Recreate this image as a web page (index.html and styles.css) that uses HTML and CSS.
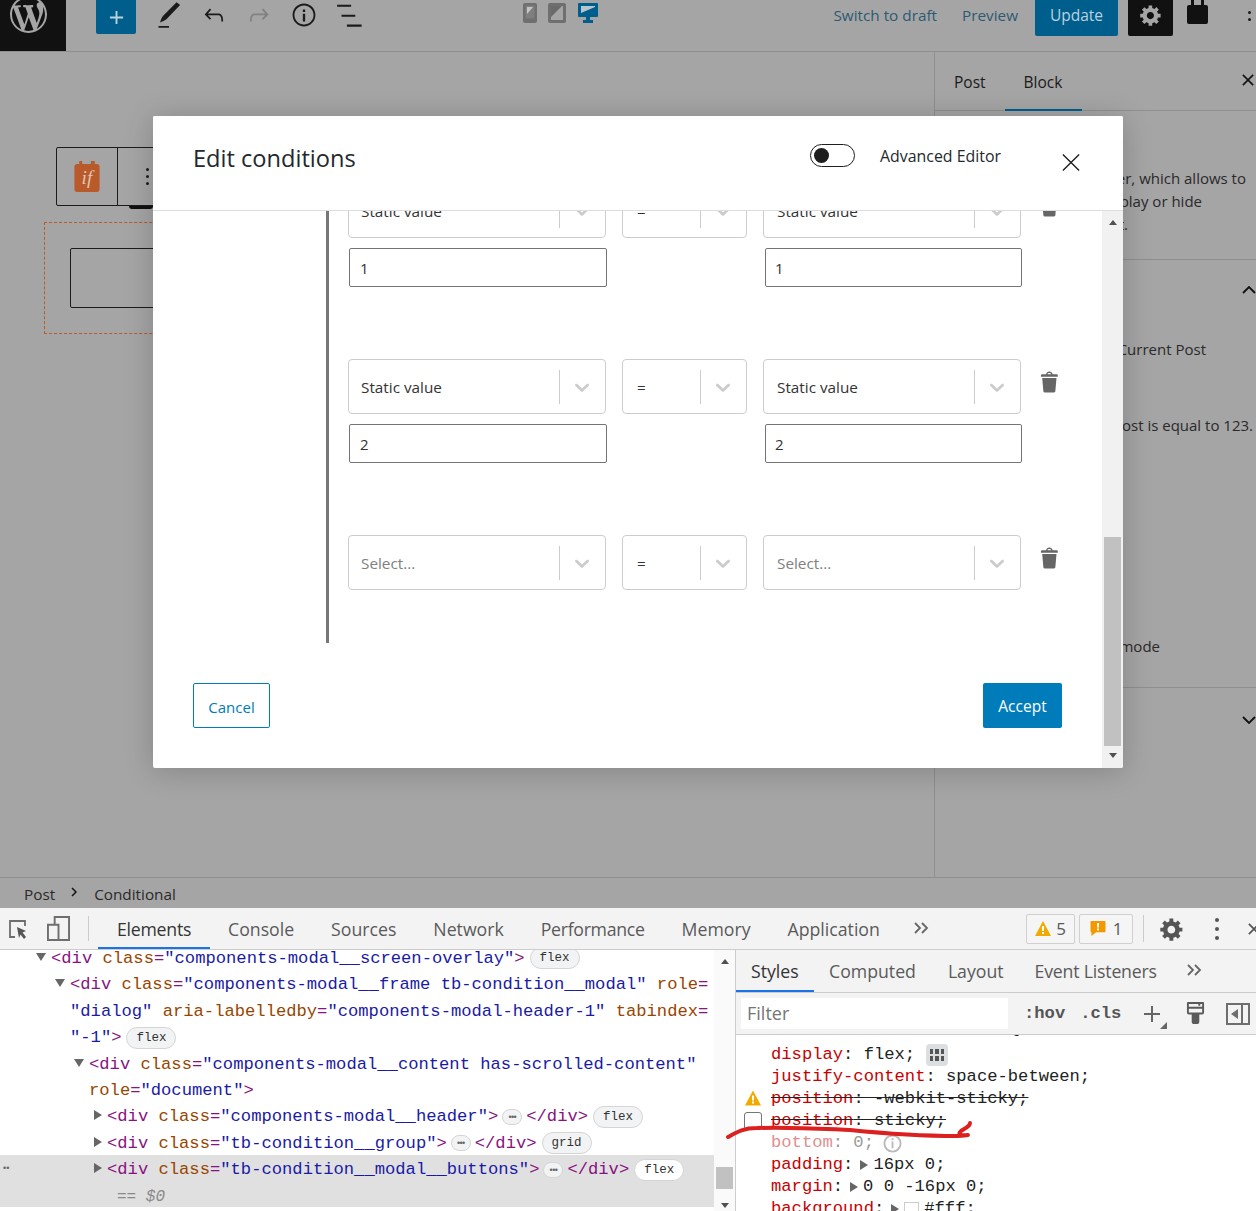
FILE: index.html
```html
<!DOCTYPE html>
<html lang="en">
<head>
<meta charset="utf-8">
<title>Edit conditions</title>
<link rel="stylesheet" href="styles.css">
</head>
<body>
<svg class="sprite" aria-hidden="true">
  <symbol id="ic-chev" viewBox="0 0 20 20"><path d="M4.516 7.548c0.436-0.446 1.043-0.481 1.576 0l3.908 3.747 3.908-3.747c0.533-0.481 1.141-0.446 1.576 0 0.436 0.445 0.408 1.197 0 1.615-0.406 0.418-4.695 4.502-4.695 4.502-0.217 0.223-0.502 0.335-0.789 0.335s-0.572-0.112-0.789-0.335c0 0-4.287-4.084-4.695-4.502s-0.436-1.170 0-1.615z"/></symbol>
  <symbol id="ic-trash" viewBox="0 0 20 20"><path d="M12 4h3c.6 0 1 .4 1 1v1H3V5c0-.6.5-1 1-1h3c.2-1.100 1.300-2 2.500-2s2.300.9 2.500 2zM8 4h3c-.2-.6-.9-1-1.500-1S8.200 3.400 8 4zM4 7h11l-.9 10.100c0 .5-.5.9-1 .9H5.900c-.5 0-.9-.4-1-.9L4 7z"/></symbol>
  <symbol id="ic-cog" viewBox="0 0 20 20"><path d="M18 12h-2.180c-.17.7-.44 1.350-.81 1.930l1.540 1.540-2.100 2.100-1.540-1.540c-.58.36-1.230.63-1.910.79V19H8v-2.180c-.68-.16-1.330-.43-1.910-.79l-1.540 1.540-2.120-2.120 1.540-1.540c-.36-.58-.63-1.230-.79-1.910H1V9.030h2.170c.16-.7.44-1.350.8-1.940L2.430 5.550l2.100-2.100 1.540 1.540c.58-.37 1.240-.64 1.930-.81V2h3v2.180c.68.16 1.330.43 1.910.79l1.540-1.540 2.120 2.120-1.540 1.540c.36.59.64 1.240.8 1.940H18V12zm-8.500 1.500c1.660 0 3-1.340 3-3s-1.340-3-3-3-3 1.340-3 3 1.340 3 3 3z"/></symbol>
  <symbol id="ic-warn" viewBox="0 0 16 15"><path d="M8 0l8 15H0z" fill="#f1ab00"/><path d="M7 5h2v5H7zM7 11h2v2H7z" fill="#fff"/></symbol>
  <symbol id="ic-more" viewBox="0 0 16 12"><path d="M2 1l5 5-5 5M9 1l5 5-5 5" fill="none" stroke="#666" stroke-width="1.800"/></symbol>
</svg>
<div class="page">
  <section class="editor">
    <header class="topbar">
      <div class="wp-logo">
        <svg class="wp-mark" viewBox="0 0 20 20"><path d="M20 10c0-5.51-4.49-10-10-10C4.48 0 0 4.49 0 10c0 5.52 4.48 10 10 10 5.51 0 10-4.48 10-10zM7.78 15.37L4.37 6.22c.55-.02 1.17-.08 1.17-.08.5-.06.44-1.13-.06-1.11 0 0-1.45.11-2.37.11-.18 0-.37 0-.58-.01C4.12 2.69 6.87 1.11 10 1.11c2.33 0 4.45.87 6.05 2.34-.68-.11-1.65.39-1.65 1.58 0 .74.45 1.36.9 2.1.35.61.55 1.36.55 2.46 0 1.49-1.4 5-1.4 5l-3.03-8.37c.54-.02.82-.17.82-.17.5-.05.44-1.25-.06-1.22 0 0-1.44.12-2.38.12-.87 0-2.33-.12-2.33-.12-.5-.03-.56 1.2-.06 1.22l.92.08 1.26 3.41zM17.41 10c.24-.64.74-1.87.43-4.25.7 1.29 1.05 2.71 1.05 4.25 0 3.29-1.73 6.24-4.4 7.78.97-2.59 1.94-5.2 2.92-7.78zM6.1 18.09C3.12 16.65 1.11 13.53 1.11 10c0-1.3.23-2.48.72-3.59C3.25 10.3 4.67 14.2 6.1 18.09zm4.03-6.63l2.58 6.98c-.86.29-1.76.45-2.71.45-.79 0-1.57-.11-2.29-.33.81-2.38 1.62-4.74 2.42-7.1z"/></svg>
      </div>
      <div class="inserter">
        <svg class="plus" viewBox="0 0 16 16"><path d="M7 1h2v6h6v2H9v6H7V9H1V7h6z"/></svg>
      </div>
      <div class="tools">
        <svg class="tool" viewBox="0 0 24 24"><path d="M3 21.500h9V23H3zM18.500 1l3 2.500L10 15.500c-1.500 1.200-3.800 2.400-5.600 3 .4-2 1.300-4.300 2.600-5.800z"/></svg>
        <svg class="tool" viewBox="0 0 24 24"><path d="M18.300 11.700c-.6-.6-1.400-.9-2.300-.9H6.700l2.900-3.300-1.100-1-4.500 5L8.500 16l1-1-2.700-2.700H16c.5 0 .9.2 1.300.5 1 1 1 3.400 1 4.500v.3h1.500v-.2c0-1.500 0-4.300-1.500-5.700z"/></svg>
        <svg class="tool tool-off" viewBox="0 0 24 24"><path d="M15.600 6.500l-1.100 1 2.900 3.300H8c-.9 0-1.700.3-2.300.9-1.400 1.500-1.400 4.200-1.400 5.600v.2h1.500v-.3c0-1.100 0-3.500 1-4.500.3-.3.7-.5 1.300-.5h9.200L14.500 15l1.100 1.100 4.600-4.600-4.600-5z"/></svg>
        <svg class="tool" viewBox="0 0 24 24"><path d="M12 2.200c-5.400 0-9.800 4.400-9.800 9.800s4.400 9.800 9.800 9.800 9.800-4.400 9.800-9.800-4.400-9.800-9.800-9.800zm0 18c-4.500 0-8.200-3.700-8.200-8.200S7.500 3.800 12 3.800s8.200 3.700 8.200 8.200-3.700 8.200-8.200 8.200zM11 17.500h2V11h-2v6.500zm0-8h2v-2.200h-2v2.200z"/></svg>
        <svg class="tool" viewBox="0 0 24 24"><path d="M13.800 3.200H1.800v1.800h12V3.200zm-3.600 17v1.800h12.600v-1.800H10.200zm7.200-8.500H5.600v1.800h11.800v-1.800z"/></svg>
      </div>
      <div class="devices">
        <svg class="device-phone" viewBox="0 0 14 20"><rect width="14" height="20" rx="2" fill="#6f6f6f"/><rect x="2.500" y="2.500" width="9" height="13" fill="#7f7f7f"/><path d="M4 4h6L4 11z" fill="#c6c6c6"/></svg>
        <svg class="device-tablet" viewBox="0 0 18 20"><path d="M2 0h14a2 2 0 0 1 2 2v16a2 2 0 0 1-2 2H2a2 2 0 0 1-2-2V2a2 2 0 0 1 2-2zm1 3v14h12V3z" fill="#6f6f6f" fill-rule="evenodd"/><path d="M3 3h11L3 14z" fill="#6a6a6a"/></svg>
        <svg class="device-desktop" viewBox="0 0 20 20"><path d="M1 0h18a1 1 0 0 1 1 1v12a1 1 0 0 1-1 1h-7v3h3v3H5v-3h3v-3H1a1 1 0 0 1-1-1V1a1 1 0 0 1 1-1z" fill="#005e8c"/><path d="M3 3h14v1L3 10z" fill="#b5c6cf"/></svg>
      </div>
      <div class="actions">
        <span class="link">Switch to draft</span>
        <span class="link preview">Preview</span>
        <span class="update">Update</span>
        <span class="settings"><svg class="cog"><use href="#ic-cog"/></svg></span>
        <svg class="plugin" viewBox="0 0 21 24"><path d="M4 0h3v5h7V0h3v5h2a2 2 0 0 1 2 2v15a2 2 0 0 1-2 2H2a2 2 0 0 1-2-2V7a2 2 0 0 1 2-2h2z"/></svg>
        <span class="more-dots"><i></i><i></i></span>
      </div>
    </header>

    <div class="workspace">
      <main class="canvas">
        <div class="block-toolbar">
          <span class="tb-icon-cell">
            <svg class="if-icon" viewBox="0 0 26 32"><path d="M5 0h3v3h9V0h4v3h2a3 3 0 0 1 3 3v23a3 3 0 0 1-3 3H3a3 3 0 0 1-3-3V6a3 3 0 0 1 3-3h2z" fill="#b85a2a"/><text x="13" y="24" class="if-text">if</text></svg>
          </span>
          <span class="tb-more-cell"><span class="more-dots more-dots-dark"><i></i><i></i><i></i></span></span>
        </div>
        <div class="block-dashed">
          <div class="block-inner"></div>
        </div>
      </main>
      <aside class="sidebar">
        <div class="side-tabs">
          <span class="side-tab">Post</span>
          <span class="side-tab side-tab-active">Block</span>
          <svg class="side-close" viewBox="0 0 14 14"><path d="M1 1l12 12M13 1L1 13"/></svg>
        </div>
        <div class="side-intro">
          <p class="side-line end-246">container, which allows to</p>
          <p class="side-line end-202">display or hide</p>
          <p class="side-line end-128">content.</p>
        </div>
        <div class="side-panel">
          <div class="side-head">
            <svg class="chev" viewBox="0 0 14 8"><path d="M1 7l6-6 6 6"/></svg>
          </div>
          <p class="side-line end-206 side-strong">Current Post</p>
          <p class="side-line end-252 side-sentence">post is equal to 123.</p>
          <p class="side-line end-160 side-mode">mode</p>
        </div>
        <div class="side-head side-last">
          <svg class="chev" viewBox="0 0 14 8"><path d="M1 1l6 6 6-6"/></svg>
        </div>
      </aside>
    </div>

    <footer class="crumbs">
      <span>Post</span>
      <svg class="crumb-sep" viewBox="0 0 6 10"><path d="M1 1l4 4-4 4"/></svg>
      <span>Conditional</span>
    </footer>

    <div class="modal">
      <div class="modal-header">
        <h1 class="modal-title">Edit conditions</h1>
        <span class="toggle"><i></i></span>
        <span class="toggle-label">Advanced Editor</span>
        <svg class="modal-close" viewBox="0 0 20 20"><path d="M1 1l18 18M19 1L1 19"/></svg>
      </div>
      <div class="modal-body">
        <div class="modal-content">
          <div class="group">
            <div class="cond">
              <div class="cond-row">
                <div class="select"><span class="select-text">Static value</span><span class="select-sep"></span><svg class="select-chev"><use href="#ic-chev"/></svg></div>
                <div class="select select-op"><span class="select-text">=</span><span class="select-sep"></span><svg class="select-chev"><use href="#ic-chev"/></svg></div>
                <div class="select select-last"><span class="select-text">Static value</span><span class="select-sep"></span><svg class="select-chev"><use href="#ic-chev"/></svg></div>
                <svg class="trash"><use href="#ic-trash"/></svg>
              </div>
              <div class="input-row">
                <div class="value-input">1</div>
                <div class="value-input value-input-right">1</div>
              </div>
            </div>
            <div class="cond">
              <div class="cond-row">
                <div class="select"><span class="select-text">Static value</span><span class="select-sep"></span><svg class="select-chev"><use href="#ic-chev"/></svg></div>
                <div class="select select-op"><span class="select-text">=</span><span class="select-sep"></span><svg class="select-chev"><use href="#ic-chev"/></svg></div>
                <div class="select select-last"><span class="select-text">Static value</span><span class="select-sep"></span><svg class="select-chev"><use href="#ic-chev"/></svg></div>
                <svg class="trash"><use href="#ic-trash"/></svg>
              </div>
              <div class="input-row">
                <div class="value-input">2</div>
                <div class="value-input value-input-right">2</div>
              </div>
            </div>
            <div class="cond">
              <div class="cond-row">
                <div class="select"><span class="select-text select-placeholder">Select...</span><span class="select-sep"></span><svg class="select-chev"><use href="#ic-chev"/></svg></div>
                <div class="select select-op"><span class="select-text">=</span><span class="select-sep"></span><svg class="select-chev"><use href="#ic-chev"/></svg></div>
                <div class="select select-last"><span class="select-text select-placeholder">Select...</span><span class="select-sep"></span><svg class="select-chev"><use href="#ic-chev"/></svg></div>
                <svg class="trash"><use href="#ic-trash"/></svg>
              </div>
            </div>
          </div>
          <div class="modal-buttons">
            <span class="btn-cancel">Cancel</span>
            <span class="btn-accept">Accept</span>
          </div>
        </div>
        <div class="scrollbar">
          <span class="arrow-up"></span>
          <span class="thumb"></span>
          <span class="arrow-down"></span>
        </div>
      </div>
    </div>
  </section>

  <section class="devtools">
    <div class="dt-main-bar">
      <svg class="dt-inspect" viewBox="0 0 20 20"><path d="M7 18H2V2h15v5" fill="none" stroke="#6e6e6e" stroke-width="1.800"/><path d="M9 8l9 4-3.500 1.500L18 18l-2 2-3.500-4.500L11 19z" fill="#555"/></svg>
      <svg class="dt-device" viewBox="0 0 24 26"><path d="M8 9V1h15v24H1V9h11v16" fill="none" stroke="#6e6e6e" stroke-width="2"/></svg>
      <span class="dt-divider"></span>
      <span class="dt-tab dt-tab-active">Elements</span>
      <span class="dt-tab">Console</span>
      <span class="dt-tab">Sources</span>
      <span class="dt-tab">Network</span>
      <span class="dt-tab dt-tab-tight">Performance</span>
      <span class="dt-tab">Memory</span>
      <span class="dt-tab">Application</span>
      <svg class="dt-chevrons"><use href="#ic-more"/></svg>
      <span class="dt-spacer"></span>
      <span class="dt-badge dt-badge-warn"><svg class="dt-badge-icon"><use href="#ic-warn"/></svg>5</span>
      <span class="dt-badge dt-badge-err"><svg class="dt-badge-icon" viewBox="0 0 16 16"><path d="M1 0h14a1 1 0 0 1 1 1v10a1 1 0 0 1-1 1H6l-5 4v-4a1 1 0 0 1-1-1V1a1 1 0 0 1 1-1z" fill="#f29900"/><path d="M7 2h2v5H7zM7 8h2v2H7z" fill="#fff"/></svg>1</span>
      <span class="dt-divider dt-divider-2"></span>
      <svg class="dt-gear"><use href="#ic-cog"/></svg>
      <span class="more-dots more-dots-dt"><i></i><i></i><i></i></span>
      <svg class="dt-close" viewBox="0 0 14 14"><path d="M1 1l12 12M13 1L1 13"/></svg>
    </div>
    <div class="dt-panes">
      <div class="dom-pane">
        <div class="dom-tree">
          <div class="dom-line lvl-1"><i class="tri tri-open"></i><span class="t">&lt;div</span> <span class="a">class</span><span class="t">=</span><span class="v">"components-modal__screen-overlay"</span><span class="t">&gt;</span><span class="pill">flex</span></div>
          <div class="dom-line lvl-2"><i class="tri tri-open"></i><span class="t">&lt;div</span> <span class="a">class</span><span class="t">=</span><span class="v">"components-modal__frame tb-condition__modal"</span> <span class="a">role</span><span class="t">=</span></div>
          <div class="dom-line lvl-2"><span class="v">"dialog"</span> <span class="a">aria-labelledby</span><span class="t">=</span><span class="v">"components-modal-header-1"</span> <span class="a">tabindex</span><span class="t">=</span></div>
          <div class="dom-line lvl-2"><span class="v">"-1"</span><span class="t">&gt;</span><span class="pill">flex</span></div>
          <div class="dom-line lvl-3"><i class="tri tri-open"></i><span class="t">&lt;div</span> <span class="a">class</span><span class="t">=</span><span class="v">"components-modal__content has-scrolled-content"</span></div>
          <div class="dom-line lvl-3"><span class="a">role</span><span class="t">=</span><span class="v">"document"</span><span class="t">&gt;</span></div>
          <div class="dom-line lvl-4"><i class="tri"></i><span class="t">&lt;div</span> <span class="a">class</span><span class="t">=</span><span class="v">"components-modal__header"</span><span class="t">&gt;</span><span class="dots-pill">•••</span><span class="t">&lt;/div&gt;</span><span class="pill">flex</span></div>
          <div class="dom-line lvl-4"><i class="tri"></i><span class="t">&lt;div</span> <span class="a">class</span><span class="t">=</span><span class="v">"tb-condition__group"</span><span class="t">&gt;</span><span class="dots-pill">•••</span><span class="t">&lt;/div&gt;</span><span class="pill">grid</span></div>
          <div class="dom-selected">
            <span class="gutter-dots">••</span>
            <div class="dom-line lvl-4"><i class="tri"></i><span class="t">&lt;div</span> <span class="a">class</span><span class="t">=</span><span class="v">"tb-condition__modal__buttons"</span><span class="t">&gt;</span><span class="dots-pill">•••</span><span class="t">&lt;/div&gt;</span><span class="pill pill-white">flex</span></div>
            <div class="dom-line lvl-5"><span class="eq">== $0</span></div>
          </div>
        </div>
        <div class="dom-scroll">
          <span class="arrow-up"></span>
          <span class="dom-thumb"></span>
          <span class="arrow-down"></span>
        </div>
      </div>
      <div class="styles-pane">
        <div class="st-tabs">
          <span class="st-tab st-tab-active">Styles</span>
          <span class="st-tab">Computed</span>
          <span class="st-tab">Layout</span>
          <span class="st-tab st-tab-wide">Event Listeners</span>
          <svg class="dt-chevrons st-chevrons"><use href="#ic-more"/></svg>
        </div>
        <div class="st-filter">
          <span class="filter-input">Filter</span>
          <span class="filter-btn filter-hov">:hov</span>
          <span class="filter-btn filter-cls">.cls</span>
          <span class="filter-plus"></span>
          <svg class="filter-paint" viewBox="0 0 20 24"><path d="M2 1h16a1 1 0 0 1 1 1v10a2 2 0 0 1-2 2h-3v8a2 2 0 0 1-2 2H8a2 2 0 0 1-2-2v-8H3a2 2 0 0 1-2-2V2a1 1 0 0 1 1-1zm1 2v3h14V3h-2v2h-2V3zm0 5v4h14V8z" fill="#5a5a5a" fill-rule="evenodd"/></svg>
          <svg class="filter-side" viewBox="0 0 24 22"><path d="M1 1h22v20H1zM16 1v20" fill="none" stroke="#6e6e6e" stroke-width="2"/><path d="M12 6v10L5 11z" fill="#6e6e6e"/></svg>
        </div>
        <div class="st-rules">
          <div class="st-line st-clip">ondition__modal__buttons {</div>
          <div class="st-line"><span class="p">display</span>: flex;<svg class="flex-edit" viewBox="0 0 22 22"><rect width="22" height="22" rx="4" fill="#dcdfe2"/><path d="M4 5h3v5H4zM9 5h4v5H9zM15 5h3v5h-3zM4 12h3v5H4zM9 12h4v5H9zM15 12h3v5h-3z" fill="#555"/></svg></div>
          <div class="st-line"><span class="p">justify-content</span>: space-between;</div>
          <div class="st-line st-struck"><svg class="warn"><use href="#ic-warn"/></svg><span><span class="p">position</span>: -webkit-sticky;</span></div>
          <div class="st-line st-struck"><span class="check"></span><span><span class="p">position</span>: sticky;</span></div>
          <div class="st-line st-dim"><span class="p">bottom</span>: 0;<svg class="info-i" viewBox="0 0 20 20"><circle cx="10" cy="10" r="8.500" fill="none" stroke="#bbb" stroke-width="2"/><path d="M9 8h2v7H9zM9 4.500h2v2H9z" fill="#bbb"/></svg></div>
          <div class="st-line"><span class="p">padding</span>:<i class="tri tri-inline"></i>16px 0;</div>
          <div class="st-line"><span class="p">margin</span>:<i class="tri tri-inline"></i>0 0 -16px 0;</div>
          <div class="st-line"><span class="p">background</span>:<i class="tri tri-inline"></i><span class="swatch"></span>#fff;</div>
        </div>
      </div>
    </div>
    <svg class="scribble" viewBox="0 0 250 30"><path d="M3 19C12 14 18 10 32 10C70 9 100 11 125 12C165 16 200 18 232 18C238 18 242 17 243 17C236 18 232 16 236 13C241 10 245 8 245 5"/></svg>
  </section>
</div>
</body>
</html>
```
FILE: styles.css
```css
* { box-sizing: border-box; }
html, body { margin: 0; padding: 0; }
body { font-family: "Open Sans", "Noto Sans", sans-serif; background: #fff; color: #222; }
.sprite { display: none; }
.page { width: 1256px; height: 1211px; overflow: hidden; display: flex; flex-direction: column; }

/* editor */
.editor { position: relative; height: 908px; background: #a5a5a5; display: flex; flex-direction: column; flex: none; }
.topbar { height: 52px; border-bottom: 1px solid #8f8f8f; display: flex; align-items: flex-start; flex: none; }
.wp-logo { width: 66px; height: 51px; background: #111; overflow: hidden; display: flex; padding-left: 10px; flex: none; }
.wp-mark { width: 37px; height: 37px; margin-top: -4px; fill: #a5a5a5; }
.inserter { width: 40px; height: 34px; margin-left: 30px; background: #005e8c; border-radius: 0 0 2px 2px; display: flex; align-items: center; justify-content: center; }
.plus { width: 15px; height: 15px; fill: #b9d3e0; }
.tools { display: flex; gap: 13px; margin-left: 17px; margin-top: 1px; }
.tool { width: 32px; height: 28px; fill: #1b1b1b; }
.tool-off { fill: #818181; }
.devices { display: flex; gap: 11px; align-items: center; margin-left: 158px; margin-top: 3px; }
.device-phone { width: 14px; height: 20px; }
.device-tablet { width: 18px; height: 20px; }
.device-desktop { width: 20px; height: 20px; margin-left: 1px; }
.actions { display: flex; align-items: flex-start; margin-left: auto; }
.link { color: #2d5a73; font-size: 15.3px; line-height: 31px; }
.preview { margin-left: 25px; }
.update { width: 83px; height: 36px; margin-left: 17px; background: #005e8c; color: #b9d3e0; font-size: 15.5px; line-height: 31px; text-align: center; border-radius: 0 0 2px 2px; }
.settings { width: 45px; height: 36px; margin-left: 10px; background: #111; border-radius: 0 0 2px 2px; display: flex; align-items: flex-start; justify-content: center; padding-top: 3px; }
.cog { width: 24px; height: 24px; fill: #a5a5a5; }
.plugin { width: 21px; height: 24px; margin-left: 14px; fill: #111; }
.more-dots { display: flex; flex-direction: column; gap: 4px; margin-left: 40px; margin-right: 5px; margin-top: 11px; }
.more-dots i { width: 3px; height: 3px; border-radius: 50%; background: #1b1b1b; display: block; }

.workspace { flex: 1; display: flex; min-height: 0; }
.canvas { flex: 1; padding: 95px 0 0 44px; }
.block-toolbar { position: relative; margin-left: 12px; width: 130px; height: 59px; border: 1px solid #1b1b1b; border-radius: 2px; display: flex; }
.block-toolbar::after { content: ""; position: absolute; left: 72px; bottom: -4px; width: 24px; height: 3px; background: #111; border-radius: 0 0 12px 12px; }
.tb-icon-cell { width: 61px; border-right: 1px solid #1b1b1b; display: flex; align-items: center; justify-content: center; }
.if-icon { width: 26px; height: 31px; }
.if-text { font-family: "Liberation Serif", serif; font-style: italic; font-size: 20px; fill: #e0c5b5; text-anchor: middle; }
.tb-more-cell { flex: 1; }
.more-dots-dark { margin: 20px 0 0 28px; }
.block-dashed { margin-top: 16px; width: 840px; height: 112px; border: 1px dashed #b85a2a; padding: 25px; }
.block-inner { height: 60px; width: 300px; border: 1px solid #1b1b1b; border-radius: 2px; }

.sidebar { width: 322px; flex: none; border-left: 1px solid #8f8f8f; display: flex; flex-direction: column; }
.side-tabs { height: 59px; border-bottom: 1px solid #8f8f8f; display: flex; align-items: center; padding-left: 19px; flex: none; }
.side-tab { font-size: 15.5px; color: #1b1b1b; margin-right: 19px; line-height: 60px; height: 59px; }
.side-tab-active { border-bottom: 2px solid #005e8c; margin-right: 0; padding: 0 19px; width: 77px; }
.side-close { width: 12px; height: 12px; margin-left: auto; margin-right: 2px; margin-top: -3px; fill: none; stroke: #111; stroke-width: 1.8; }
.side-intro { height: 149px; padding-top: 56px; border-bottom: 1px solid #8f8f8f; flex: none; }
.side-line { margin: 0; font-size: 15px; line-height: 23px; color: #2a2a2a; white-space: nowrap; text-align: right; }
.end-246 { padding-right: 10px; }
.end-202 { padding-right: 54px; }
.end-128 { padding-right: 128px; }
.end-206 { padding-right: 50px; }
.end-252 { padding-right: 3px; }
.end-160 { padding-right: 96px; }
.side-panel { height: 428px; border-bottom: 1px solid #8f8f8f; flex: none; }
.side-head { display: flex; justify-content: flex-end; padding: 26px 0 0 0; height: 46px; }
.chev { width: 14px; height: 8px; fill: none; stroke: #111; stroke-width: 1.8; }
.side-strong { font-weight: 500; margin-top: 32px; }
.side-sentence { margin-top: 53px; }
.side-mode { margin-top: 198px; }
.side-last { padding-top: 28px; }

.crumbs { height: 31px; flex: none; border-top: 1px solid #8f8f8f; display: flex; align-items: center; padding: 1px 0 0 24px; font-size: 15.3px; color: #2a2a2a; }
.crumb-sep { width: 6px; height: 10px; margin: -3px 17px 0 16px; fill: none; stroke: #111; stroke-width: 1.5; }

/* modal */
.modal { position: absolute; left: 153px; top: 116px; width: 970px; height: 652px; background: #fff; box-shadow: 0 3px 30px rgba(0,0,0,.2); border-radius: 2px; display: flex; flex-direction: column; overflow: hidden; }
.modal-header { height: 95px; flex: none; border-bottom: 1px solid #ddd; display: flex; align-items: flex-start; padding-left: 40px; position: relative; z-index: 1; background: #fff; }
.modal-title { margin: 24px 0 0; font-size: 23.6px; font-weight: 400; line-height: 36px; color: #23282d; }
.toggle { width: 45px; height: 23px; margin-left: auto; margin-top: 28px; border: 1px solid #1e1e1e; border-radius: 12px; padding: 3px 0 0 3px; }
.toggle i { display: block; width: 15px; height: 15px; background: #1e1e1e; border-radius: 50%; }
.toggle-label { font-size: 15.9px; font-weight: 500; color: #23282d; margin: 29px 0 0 25px; line-height: 22px; }
.modal-close { width: 18px; height: 19px; margin: 37px 43px 0 61px; fill: none; stroke: #1b1b1b; stroke-width: 1.5; }
.modal-body { flex: 1; display: flex; min-height: 0; }
.modal-content { flex: 1; overflow: hidden; min-width: 0; }
.group { margin: -28px 0 0 173px; border-left: 3px solid #777; height: 460px; padding-left: 19px; }
.cond { height: 176px; }
.cond-row { display: flex; gap: 16px; align-items: flex-start; }
.select { width: 258px; height: 55px; border: 1px solid #ccc; border-radius: 4px; display: flex; align-items: center; font-size: 15.3px; color: #333; padding-left: 12px; flex: none; }
.select-op { width: 125px; padding-left: 14px; }
.select-last { padding-left: 13px; }
.select-text { flex: 1; }
.select-placeholder { color: #808080; }
.select-sep { width: 1px; height: 34px; background: #ccc; }
.select-chev { width: 24px; height: 24px; fill: #ccc; margin: 0 11px 0 10px; flex: none; }
.trash { width: 26px; height: 26px; margin: 10px 0 0 0; fill: #666; flex: none; }
.input-row { display: flex; margin: 10px 0 0 1px; }
.value-input { width: 258px; height: 39px; border: 1px solid #757575; border-radius: 2px; font-size: 15px; color: #333; line-height: 38px; padding-left: 10px; }
.value-input-right { margin-left: 158px; width: 257px; padding-left: 9px; }
.modal-buttons { display: flex; justify-content: space-between; padding: 40px 40px 0; }
.btn-cancel { width: 77px; height: 45px; border: 1px solid #007cba; border-radius: 2px; color: #007cba; font-size: 15px; line-height: 47px; text-align: center; }
.btn-accept { width: 79px; height: 45px; background: #007cba; border-radius: 2px; color: #fff; font-size: 15.5px; line-height: 47px; text-align: center; }
.scrollbar { width: 21px; flex: none; background: #f1f1f1; display: flex; flex-direction: column; align-items: center; }
.arrow-up { width: 0; height: 0; border: 4.5px solid transparent; border-bottom: 5px solid #505050; border-top: 0; margin-top: 9px; flex: none; }
.arrow-down { width: 0; height: 0; border: 4.5px solid transparent; border-top: 5px solid #505050; border-bottom: 0; flex: none; }
.scrollbar .arrow-down { margin: 7px 0 10px; }
.scrollbar .thumb { width: 17px; height: 209px; background: #c1c1c1; margin-top: auto; flex: none; }

/* devtools */
.devtools { position: relative; flex: 1; min-height: 0; display: flex; flex-direction: column; background: #fff; overflow: hidden; }
.dt-main-bar { height: 42px; flex: none; background: #f3f3f3; border-bottom: 1px solid #ccc; display: flex; align-items: center; color: #5a5a5a; padding-left: 8px; }
.dt-inspect { width: 20px; height: 20px; }
.dt-device { width: 23px; height: 25px; margin-left: 19px; }
.dt-divider { width: 1px; height: 25px; background: #ccc; margin-left: 18px; }
.dt-tab { margin-left: 37px; line-height: 43px; height: 41px; font-size: 17.7px; white-space: nowrap; }
.dt-tab-active { color: #333; margin-left: 9px; padding: 0 19px; border-bottom: 2px solid #1a73e8; width: 112px; letter-spacing: -0.25px; }
.dt-tab-active + .dt-tab { margin-left: 18px; }
.dt-tab-tight { letter-spacing: -0.3px; }
.dt-chevrons { width: 16px; height: 12px; margin-left: 33px; margin-top: -2px; }
.dt-spacer { flex: 1; }
.dt-badge { height: 30px; border: 1px solid #d0d0d0; border-radius: 2px; display: flex; align-items: center; justify-content: center; gap: 5px; margin-right: 4px; font-size: 17px; background: #f5f5f5; flex: none; }
.dt-badge-warn { width: 49px; }
.dt-badge-err { width: 54px; gap: 7px; }
.dt-badge-icon { width: 16px; height: 15px; }
.dt-divider-2 { margin-left: 6px; height: 27px; }
.dt-gear { width: 26px; height: 26px; margin-left: 15px; fill: #555; flex: none; }
.more-dots-dt { margin: 0 0 0 30px; gap: 5px; }
.more-dots-dt i { width: 4px; height: 4px; background: #555; }
.dt-close { width: 12px; height: 14px; margin-left: 29px; margin-right: -4px; flex: none; fill: none; stroke: #555; stroke-width: 2; }
.dt-panes { flex: 1; display: flex; min-height: 0; }
.dom-pane { width: 736px; flex: none; border-right: 1px solid #ccc; display: flex; overflow: hidden; }
.dom-tree { width: 714px; flex: none; font-family: "Liberation Mono", monospace; font-size: 17.17px; margin-top: -4px; }
.dom-line { position: relative; height: 26.4px; line-height: 26.4px; white-space: pre; }
.lvl-1 { padding-left: 51px; }
.lvl-2 { padding-left: 70px; }
.lvl-3 { padding-left: 89px; }
.lvl-4 { padding-left: 107px; }
.lvl-5 { padding-left: 117px; }
.t { color: #881280; }
.a { color: #994500; }
.v { color: #1a1aa6; }
.tri { position: absolute; top: 6px; width: 0; height: 0; border-top: 5.5px solid transparent; border-bottom: 5.5px solid transparent; border-left: 8px solid #666; margin-left: -13px; }
.tri-open { top: 7px; border-left: 5px solid transparent; border-right: 5px solid transparent; border-top: 8px solid #666; border-bottom: 0; margin-left: -15px; }
.pill { display: inline-block; width: 50px; height: 22px; margin-left: 5px; border: 1px solid #d5d5d5; border-radius: 11px; background: #f1f3f4; color: #333; font-size: 12.5px; line-height: 20px; text-align: center; vertical-align: middle; }
.pill-white { background: #fff; }
.dots-pill { display: inline-block; width: 20px; height: 16px; margin: 0 4px; border: 1px solid #d5d5d5; border-radius: 8px; background: #f1f3f4; color: #666; font-size: 9px; letter-spacing: -0.6px; line-height: 14px; text-align: center; vertical-align: middle; font-family: "Liberation Sans", sans-serif; }
.dom-selected { position: relative; background: #e0e0e0; height: 52px; margin-top: -2px; padding-top: 2px; }
.gutter-dots { position: absolute; left: 3px; top: 6px; font-size: 9px; line-height: 14px; color: #666; font-family: "Liberation Sans", sans-serif; }
.eq { color: #8a8a8a; font-style: italic; font-size: 16px; }
.dom-scroll { flex: 1; background: #fafafa; display: flex; flex-direction: column; align-items: center; }
.dom-thumb { width: 17px; height: 22px; background: #c1c1c1; margin-top: auto; flex: none; }
.dom-scroll .arrow-up { margin-top: 9px; }
.dom-scroll .arrow-down { margin: 14px 0 3px; }
.styles-pane { flex: 1; min-width: 0; display: flex; flex-direction: column; }
.st-tabs { height: 43px; flex: none; background: #f3f3f3; border-bottom: 1px solid #ccc; display: flex; align-items: center; font-size: 17.7px; color: #5a5a5a; }
.st-tab { margin-left: 32px; line-height: 43px; height: 42px; white-space: nowrap; }
.st-tab-active { color: #333; margin-left: 0; padding: 0 15px; width: 78px; border-bottom: 2px solid #1a73e8; }
.st-tab-active + .st-tab { margin-left: 15px; }
.st-tab-wide { margin-left: 31px; letter-spacing: -0.2px; }
.st-chevrons { margin-left: 29px; }
.st-filter { height: 42px; flex: none; background: #f3f3f3; border-bottom: 1px solid #ccc; display: flex; align-items: center; padding-left: 5px; }
.filter-input { width: 267px; height: 31px; background: #fff; font-size: 18px; line-height: 31px; padding-left: 6px; color: #757575; }
.filter-btn { font-family: "Liberation Mono", monospace; font-weight: 700; font-size: 17.17px; color: #555; }
.filter-hov { margin-left: 16px; }
.filter-cls { margin-left: 15px; }
.filter-plus { position: relative; width: 16px; height: 16px; margin-left: 23px; background: linear-gradient(#666,#666) center/16px 2px no-repeat, linear-gradient(#666,#666) center/2px 16px no-repeat; }
.filter-plus::after { content: ""; position: absolute; right: -7px; bottom: -7px; border-left: 7px solid transparent; border-bottom: 7px solid #666; }
.filter-paint { width: 19px; height: 23px; margin-left: 26px; margin-top: -3px; }
.filter-side { width: 24px; height: 22px; margin-left: 21px; }
.st-rules { flex: 1; min-height: 0; overflow: hidden; background: #fff; font-family: "Liberation Mono", monospace; font-size: 17.17px; color: #222; }
.st-line { height: 22px; line-height: 22px; padding-left: 35px; white-space: pre; display: flex; align-items: center; position: relative; }
.st-clip { margin-top: -17px; height: 26px; padding-left: 16px; align-items: flex-start; }
.p { color: #c80000; }
.st-struck > span { text-decoration: line-through; }
.st-dim { color: #999; }
.st-dim .p { color: #e08f8f; }
.flex-edit { width: 22px; height: 22px; margin-left: 11px; }
.warn { position: absolute; left: 9px; top: 2px; width: 16px; height: 16px; }
.check { position: absolute; left: 8px; top: 2px; width: 18px; height: 18px; border: 1px solid #767676; border-radius: 3px; background: #fff; }
.info-i { width: 19px; height: 19px; margin-left: 9px; }
.tri-inline { position: static; margin: 0 5px 0 7px; }
.swatch { width: 15px; height: 15px; border: 1px solid #ccc; margin-right: 5px; background: #fff; }
.scribble { position: absolute; left: 725px; top: 210px; width: 250px; height: 30px; fill: none; stroke: #dc1f1f; stroke-width: 4; stroke-linecap: round; stroke-linejoin: round; }
```
